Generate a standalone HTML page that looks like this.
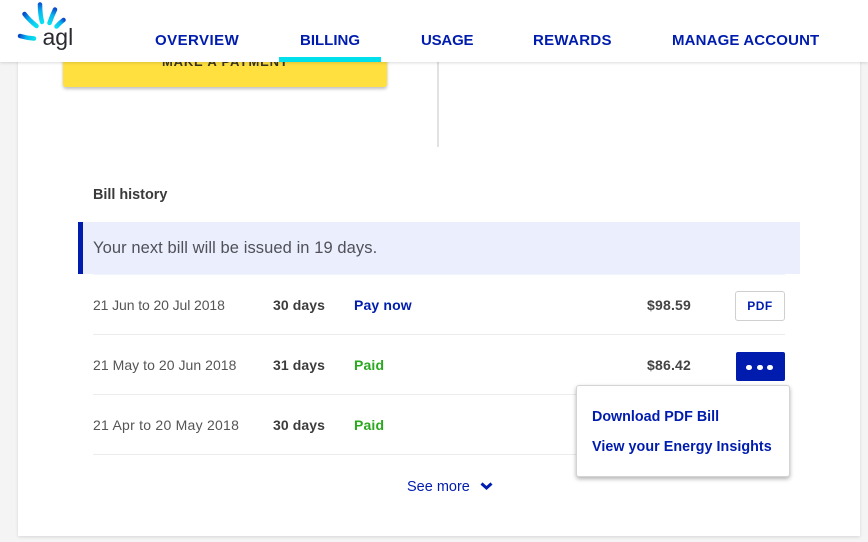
<!DOCTYPE html>
<html>
<head>
<meta charset="utf-8">
<style>
html,body{margin:0;padding:0;width:868px;height:542px;overflow:hidden;background:#f4f4f4;}
body{position:relative;font-family:"Liberation Sans",sans-serif;color:#414141;}
div,a,span{position:absolute;white-space:nowrap;}
.nav{top:32px;font:bold 15px/18px "Liberation Sans",sans-serif;color:#001cae;}
.date{left:93px;line-height:18px;color:#555;font-family:"Liberation Sans",sans-serif;font-size:14px;}
.days{left:273px;font:bold 14px/18px "Liberation Sans",sans-serif;letter-spacing:.1px;color:#3c3c3c;}
.st{left:354px;font:bold 14px/18px "Liberation Sans",sans-serif;letter-spacing:.15px;}
.amt{left:647px;font:bold 14px/18px "Liberation Sans",sans-serif;letter-spacing:.2px;color:#444;}
.ln{left:93px;width:692px;height:1px;background:#ececec;}
</style>
</head>
<body>
<div style="left:18px;top:0;width:842px;height:536px;background:#fff;box-shadow:0 1px 3px rgba(0,0,0,.12);"></div>

<div style="left:63px;top:50px;width:324px;height:37px;background:#ffe03f;border-radius:3px;box-shadow:0 2px 3px rgba(0,0,0,.25);"></div>
<div style="left:162px;top:53px;font:bold 13px/18px 'Liberation Sans',sans-serif;letter-spacing:.8px;color:#3a3520;">MAKE A PAYMENT</div>
<div style="left:437px;top:60px;width:2px;height:87px;background:#e2e2e2;"></div>

<div style="left:0;top:0;width:868px;height:62px;background:#fff;box-shadow:0 1px 3px rgba(0,0,0,.14);"></div>
<svg style="position:absolute;left:14px;top:0" width="64" height="56" viewBox="0 0 64 56">
<defs>
<linearGradient id="a" x1="25" y1="2" x2="28" y2="22" gradientUnits="userSpaceOnUse"><stop offset="0" stop-color="#0a45c8"/><stop offset=".45" stop-color="#08b4ee"/><stop offset="1" stop-color="#08e0f0"/></linearGradient>
<linearGradient id="b" x1="10" y1="13" x2="23" y2="25" gradientUnits="userSpaceOnUse"><stop offset="0" stop-color="#0a45c8"/><stop offset=".45" stop-color="#08b4ee"/><stop offset="1" stop-color="#08e0f0"/></linearGradient>
<linearGradient id="c" x1="41" y1="8" x2="35" y2="24" gradientUnits="userSpaceOnUse"><stop offset="0" stop-color="#0a45c8"/><stop offset=".45" stop-color="#08b4ee"/><stop offset="1" stop-color="#08e0f0"/></linearGradient>
<linearGradient id="d" x1="50" y1="19" x2="42" y2="27" gradientUnits="userSpaceOnUse"><stop offset="0" stop-color="#0a45c8"/><stop offset=".45" stop-color="#08b4ee"/><stop offset="1" stop-color="#08e0f0"/></linearGradient>
<linearGradient id="e" x1="5" y1="36" x2="21" y2="39" gradientUnits="userSpaceOnUse"><stop offset="0" stop-color="#0a45c8"/><stop offset=".45" stop-color="#08b4ee"/><stop offset="1" stop-color="#08e0f0"/></linearGradient>
</defs>
<g fill="none" stroke-width="4.500" stroke-linecap="round">
<path d="M26 4.500Q26 14 28 22" stroke="url(#a)"/>
<path d="M10.500 14Q15 20 22.500 26" stroke="url(#b)"/>
<path d="M41 9.500Q38 16 35.500 23" stroke="url(#c)"/>
<path d="M49.500 20Q45.500 23 42.500 26.500" stroke="url(#d)"/>
<path d="M6 36Q13 38 20 38.500" stroke="url(#e)"/>
</g>
<text x="28.500" y="45" font-family="Liberation Sans,sans-serif" font-size="23" fill="#2a2a30">agl</text>
</svg>

<div class="nav" style="left:155px;letter-spacing:.45px;">OVERVIEW</div>
<div class="nav" style="left:300px;">BILLING</div>
<div class="nav" style="left:421px;letter-spacing:-.2px;">USAGE</div>
<div class="nav" style="left:533px;letter-spacing:.3px;">REWARDS</div>
<div class="nav" style="left:672px;letter-spacing:.15px;">MANAGE ACCOUNT</div>
<div style="left:279px;top:57px;width:102px;height:5px;background:#00dfec;"></div>

<div style="left:93px;top:186px;font:bold 14.4px/18px 'Liberation Sans',sans-serif;color:#3a3a3a;">Bill history</div>

<div style="left:93px;top:274px;width:692px;height:1px;background:#f2f4fd;"></div>
<div style="left:78px;top:222px;width:722px;height:52px;background:#ebeefc;"></div>
<div style="left:78px;top:222px;width:5px;height:52px;background:#001cae;"></div>
<div style="left:93px;top:238px;font:16.500px/20px 'Liberation Sans',sans-serif;letter-spacing:.08px;color:#50505a;">Your next bill will be issued in 19 days.</div>

<div class="date" style="top:296px;letter-spacing:-.1px;">21 Jun to 20 Jul 2018</div>
<div class="days" style="top:296px;">30 days</div>
<div class="st" style="top:296px;color:#001cae;">Pay now</div>
<div class="amt" style="top:296px;">$98.59</div>
<div style="left:735px;top:291px;width:48px;height:28px;border:1px solid #cfcfcf;border-radius:3px;background:#fff;text-align:center;font:bold 12px/28px 'Liberation Sans',sans-serif;letter-spacing:.5px;color:#001cae;">PDF</div>
<div class="ln" style="top:334px;"></div>

<div class="date" style="top:356px;letter-spacing:.05px;">21 May to 20 Jun 2018</div>
<div class="days" style="top:356px;">31 days</div>
<div class="st" style="top:356px;color:#2aa81f;">Paid</div>
<div class="amt" style="top:356px;">$86.42</div>
<div style="left:736px;top:352px;width:49px;height:29px;border-radius:2px;background:#001cae;"></div>
<div style="left:746px;top:364.500px;width:5.500px;height:5.500px;border-radius:50%;background:#fff;"></div>
<div style="left:757px;top:364.500px;width:5.500px;height:5.500px;border-radius:50%;background:#fff;"></div>
<div style="left:767px;top:364.500px;width:5.500px;height:5.500px;border-radius:50%;background:#fff;"></div>
<div class="ln" style="top:394px;"></div>

<div class="date" style="top:416px;letter-spacing:.25px;">21 Apr to 20 May 2018</div>
<div class="days" style="top:416px;">30 days</div>
<div class="st" style="top:416px;color:#2aa81f;">Paid</div>
<div class="ln" style="top:454px;"></div>

<div style="left:407px;top:478px;font:14.5px/18px 'Liberation Sans',sans-serif;color:#001cae;">See more</div>
<svg style="position:absolute;left:479px;top:481px" width="15" height="12" viewBox="0 0 15 12"><path d="M2.500 2.500L7.500 7L12.500 2.500" fill="none" stroke="#001cae" stroke-width="3"/></svg>

<div style="left:576px;top:385px;width:212px;height:90px;background:#fff;border:1px solid #d4d4d4;border-radius:3px;box-shadow:0 2px 4px rgba(0,0,0,.3);"></div>
<div style="left:592px;top:408px;font:bold 14.300px/18px 'Liberation Sans',sans-serif;color:#001cae;">Download PDF Bill</div>
<div style="left:592px;top:438px;font:bold 14.300px/18px 'Liberation Sans',sans-serif;letter-spacing:.05px;color:#001cae;">View your Energy Insights</div>
</body>
</html>
